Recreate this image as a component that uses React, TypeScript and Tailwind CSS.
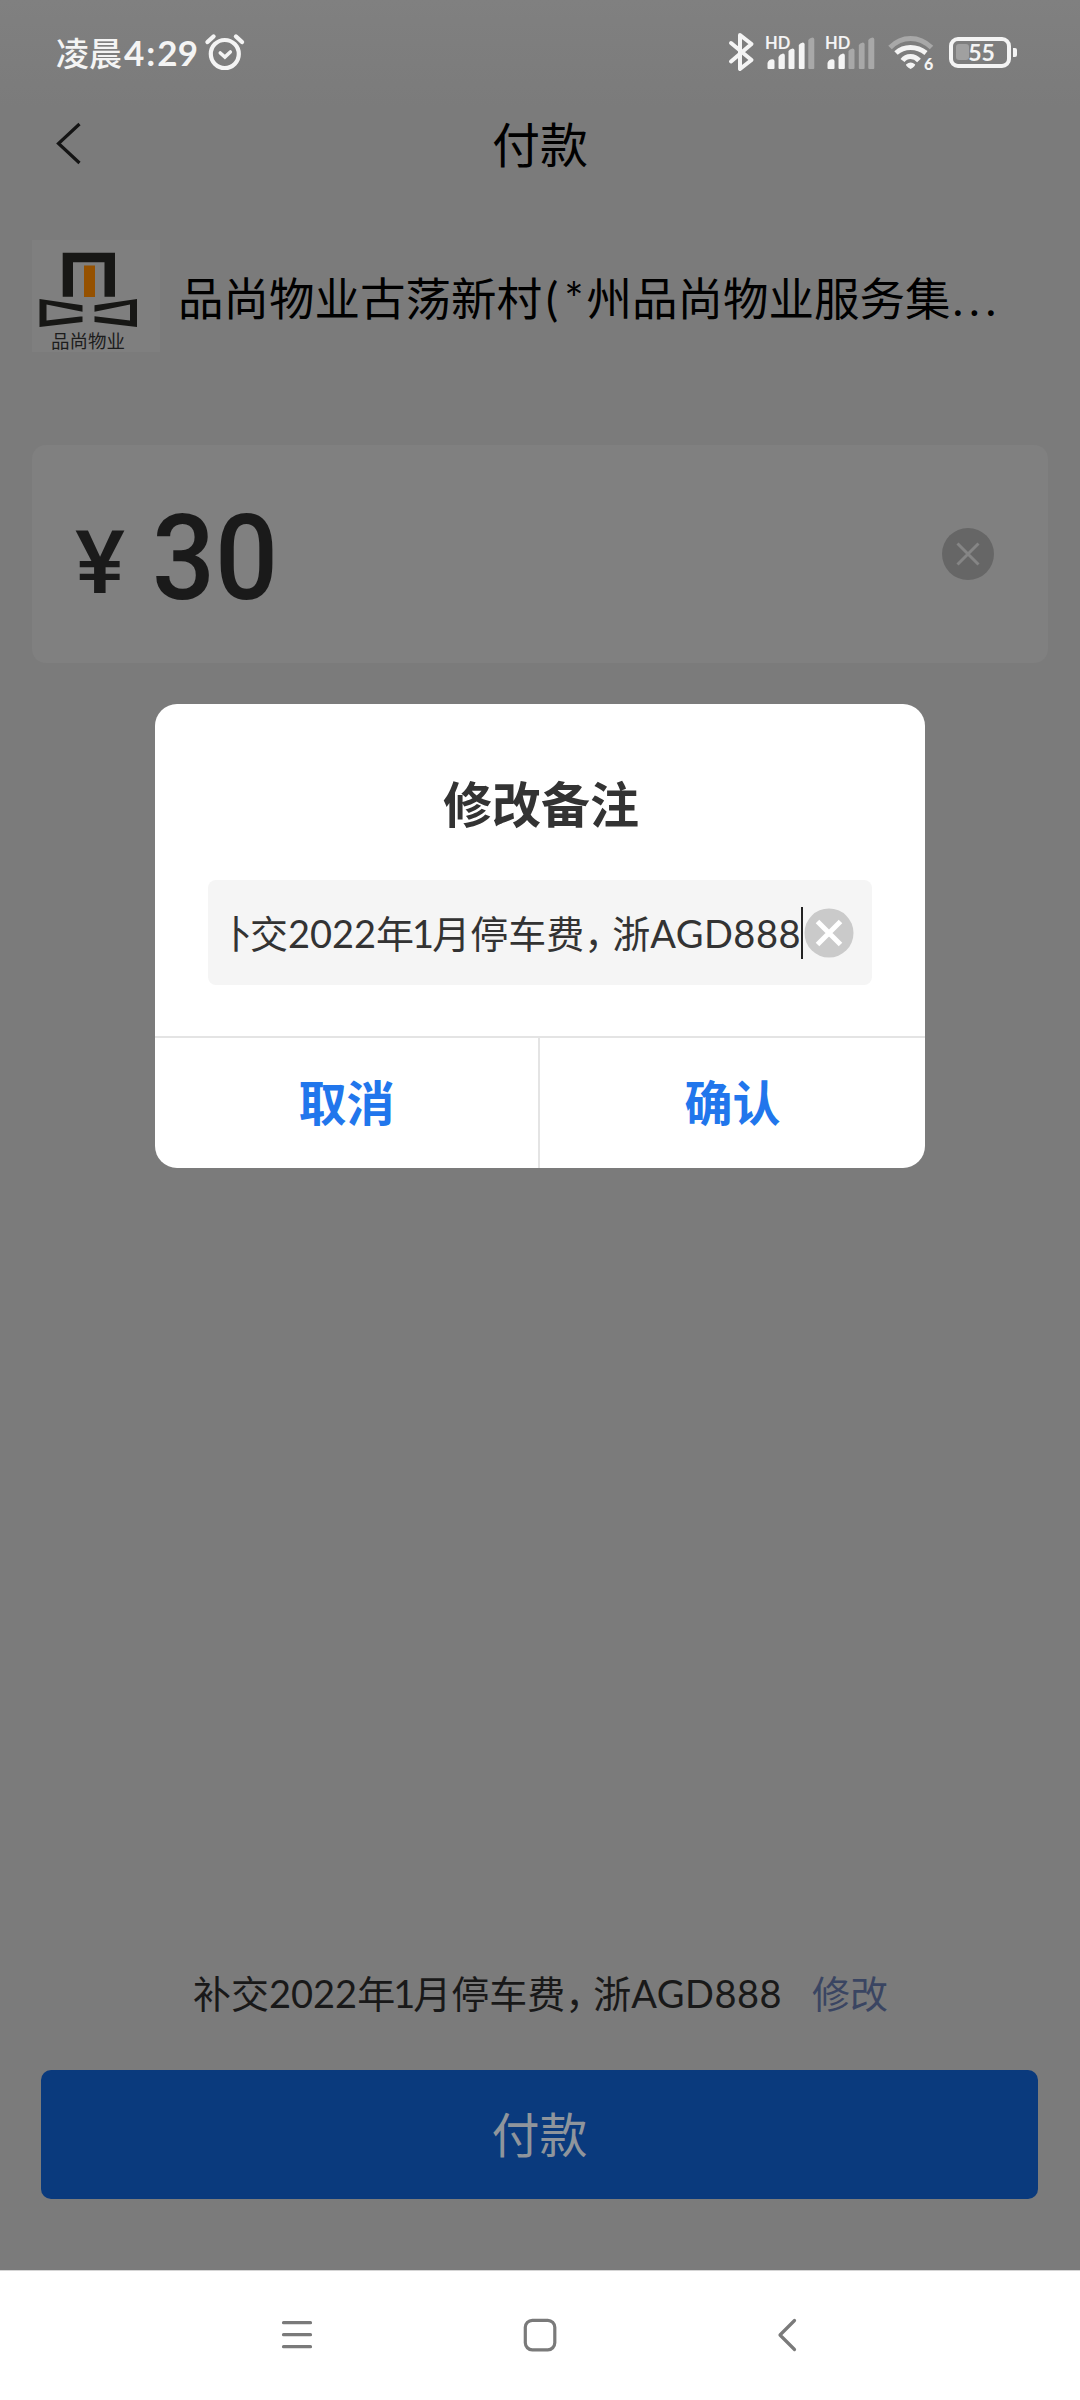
import React from "react";

const cjk = "font-['Lato','Noto_Sans_CJK_SC',sans-serif]";

function AlarmIcon() {
  return (
    <svg className="ml-[6px] h-[40px] w-[42px] shrink-0" viewBox="0 0 42 40" fill="none" stroke="#f4f4f4" strokeWidth="4.2" strokeLinecap="round">
      <circle cx="20.8" cy="22" r="14" />
      <path d="M16.3 21l4.6 4 5.4-5" strokeWidth="3.6" />
      <path d="M3.5 10l6-5.5M38 10l-6-5.5" strokeWidth="4.4" />
    </svg>
  );
}

function BluetoothIcon() {
  return (
    <svg className="h-[42px] w-[28px]" viewBox="727 31 28 42" fill="none" stroke="#f4f4f4" strokeWidth="4" strokeLinecap="round" strokeLinejoin="round">
      <path d="M731 43l20.500 17L740 69V35l11.500 9L731 61.500" />
    </svg>
  );
}

const bars = [
  "M2.500 36v-5q1-3.500 5-3.800a2 2 0 0 1 2 2V36q0 1-1 1h-5q-1 0-1-1z",
  "M13.500 36V25q1-3 4.500-3.600 1.800 0 1.800 2V36q0 1-1 1h-4.200q-1 0-1.100-1z",
  "M23.500 36V19q1-2 4-2.600 2 0 2 2V36q0 1-1 1h-4q-1 0-1-1z",
  "M33.800 36V13q1-2 4-2.600 1.800 0 1.800 2V36q0 1-1 1h-3.800q-1 0-1-1z",
  "M43.300 36V8q1-2 4-2.600 2 0 2 2V36q0 1-1 1h-4q-1 0-1-1z",
];

function Signal({ level }: { level: number }) {
  return (
    <div className="relative h-[40px] w-[50px]">
      <svg className="h-full w-full" viewBox="0 0 50 40">
        {bars.map((d, i) => (
          <path key={i} d={d} fill={i < level ? "#f4f4f4" : "#a8a8a8"} />
        ))}
      </svg>
      <span className="absolute -top-[1px] left-0 font-[Lato] text-[16.500px] leading-[24px] font-bold text-[#f4f4f4]">HD</span>
    </div>
  );
}

function WifiIcon() {
  return (
    <div className="relative h-[42px] w-[48px]">
      <svg className="h-full w-full" viewBox="887 31 48 42" fill="none" strokeWidth="5" strokeLinecap="butt">
        <path d="M890 47.500Q899 38.500 910.500 38.500T931.500 47.500" stroke="#a8a8a8" />
        <path d="M896 53Q902 47.500 910.500 47.500T926 53" stroke="#f4f4f4" />
        <path d="M902.500 60.500Q905.500 56.500 910.500 56.500T919 60.500" stroke="#f4f4f4" />
        <path d="M906 64.500q4.700-4 9.200 0 .2 1.500-4.600 4.600-4.800-3-4.600-4.600z" fill="#f4f4f4" />
      </svg>
      <span className="absolute top-[23px] left-[37px] font-[Lato] text-[16px] leading-[20px] font-black text-[#f4f4f4]">6</span>
    </div>
  );
}

function Battery() {
  return (
    <div className="flex items-center gap-[2px]">
      <div className="relative flex h-[31px] w-[62px] items-center justify-center rounded-[9px] border-[4.500px] border-[#f4f4f4]">
        <div className="absolute top-[3px] left-[3px] h-[16px] w-[13px] rounded-[3px] bg-[#a0a0a0]" />
        <span className="relative ml-[3px] font-[Lato] text-[23px] leading-[22px] font-bold text-[#f4f4f4]">55</span>
      </div>
      <div className="h-[9px] w-[4px] rounded-r-[2px] bg-[#f4f4f4]" />
    </div>
  );
}

function StatusBar() {
  return (
    <div className="flex h-[106px] shrink-0 items-start bg-linear-to-b from-[#808080] to-[#7b7b7b] pl-[56px]">
      <div className="mt-[32px] flex h-[40px] items-center">
        <span className={`${cjk} text-[33px] leading-[40px] font-medium whitespace-nowrap text-[#f4f4f4]`}>
          凌晨<span className="ml-[2px] text-[35px] font-bold">4<span className="mx-[2px]">:</span>29</span>
        </span>
        <AlarmIcon />
      </div>
      <div className="mt-[31px] mr-[63px] ml-auto flex h-[42px] items-center">
        <BluetoothIcon />
        <div className="ml-[10px]"><Signal level={4} /></div>
        <div className="ml-[10px]"><Signal level={2} /></div>
        <div className="ml-[12px]"><WifiIcon /></div>
        <div className="ml-[14px]"><Battery /></div>
      </div>
    </div>
  );
}

function Logo() {
  return (
    <div className="relative h-[112px] w-[128px] shrink-0 bg-[#7f7f7f]">
      <svg className="h-full w-full" viewBox="32 240 128 112" fill="#171715">
        <path d="M62.700 252.700H115V296.700H104.500V262.200H73V296.700H62.700z" />
        <path d="M84 265.500H95V297H84z" fill="#955100" />
        <path fillRule="evenodd" d="M39.500 299L82.500 305.300V322L39.500 327zM46.500 304.500V320.500L82.500 316.300V311.700z" />
        <path fillRule="evenodd" d="M137 299L94.500 305.300V322L137 327zM130 304.500V320.500L94.500 316.300V311.700z" />
      </svg>
      <span className="absolute top-[88px] left-[19px] font-['Noto_Sans_CJK_SC',sans-serif] text-[18.500px] leading-[24px] whitespace-nowrap text-[#1c1c1c]">品尚物业</span>
    </div>
  );
}

function Remark() {
  return (
    <span>
      补交2022年<span className="-mx-[2px]">1</span>月停车费
      <span className="mr-[9px] [font-feature-settings:'halt']">，</span>浙<span className="tracking-[0.500px]">AGD888</span>
    </span>
  );
}

function Dialog() {
  return (
    <div className="absolute top-[704px] left-[155px] flex h-[464px] w-[770px] flex-col overflow-hidden rounded-[22px] bg-white">
      <h2 className="mt-[66px] pl-[2px] text-center text-[49px] leading-[68px] font-bold text-[#333333]">修改备注</h2>
      <div className="mx-[53px] mt-[42px] flex h-[105px] items-center rounded-[8px] bg-[#f5f5f5] pl-[25px]">
        <div className="flex w-[568px] justify-end overflow-hidden text-[38px] leading-[52px] whitespace-nowrap text-[#333333]">
          <Remark />
        </div>
        <div className="h-[52px] w-[1.500px] bg-[#222222]" />
        <svg className="ml-px h-[50px] w-[50px]" viewBox="0 0 50 50">
          <circle cx="25" cy="25" r="24.500" fill="#cacaca" />
          <path d="M13.500 13.500L36.500 36.500M36.500 13.500L13.500 36.500" stroke="#fff" strokeWidth="5" />
        </svg>
      </div>
      <div className="mt-[51px] flex flex-1 border-t-2 border-[#e4e4e4] text-[48px] font-bold text-[#2176ec]">
        <button className="flex w-[385px] items-center justify-center border-r-2 border-[#e4e4e4]">取消</button>
        <button className="flex flex-1 items-center justify-center">确认</button>
      </div>
    </div>
  );
}

function NavBar() {
  return (
    <div className="h-[130px] border-t border-[#d5d5d5] bg-white">
      <svg className="h-[129px] w-[1080px]" viewBox="0 2271 1080 129" fill="none" stroke="#7a7a7a" strokeWidth="3.200" strokeLinecap="round" strokeLinejoin="round">
        <path d="M283.500 2322.700h27M283.500 2334.700h27M283.500 2346.700h27" />
        <rect x="525.300" y="2320.300" width="29.500" height="29.500" rx="7" />
        <path d="M794.500 2320.500L780 2335l14.500 14.500" />
      </svg>
    </div>
  );
}

export default function App() {
  return (
    <div className={`${cjk} relative flex h-[2400px] w-[1080px] flex-col overflow-hidden bg-[#7b7b7b]`} lang="zh-CN">
      <StatusBar />
      <header className="relative flex h-[78px] items-center justify-center">
        <svg className="absolute top-[14px] left-[54px] h-[48px] w-[32px]" viewBox="54 120 32 48" fill="none" stroke="#141414" strokeWidth="3.200">
          <path d="M79.500 124L58.500 143.500L79.500 163" />
        </svg>
        <h1 className="text-[48px] leading-[78px] text-black">付款</h1>
      </header>
      <div className="mt-[56px] flex h-[112px] items-center pl-[32px]">
        <Logo />
        <span className="ml-[18px] pt-[6px] text-[45.500px] leading-[60px] whitespace-nowrap text-black">
          品尚物业古荡新村<span className="mr-[3px] ml-[4px]">(</span><span className="mr-[3px] ml-[3px]">*</span>州品尚物业服务集<span className="ml-[2px] tracking-[5.800px]">...</span>
        </span>
      </div>
      <section className="mx-[32px] mt-[93px] flex h-[218px] items-center rounded-[14px] bg-[#808080] font-[Roboto] font-medium text-[#1a1a1a]">
        <span className="ml-[43px] origin-left scale-x-[1.07] pt-[18px] text-[88px] leading-[100px]">¥</span>
        <span className="ml-[30px] origin-left scale-x-[0.94] pt-[9px] text-[118px] leading-[130px]">30</span>
        <svg className="mr-[54px] mb-px ml-auto h-[52px] w-[52px]" viewBox="0 0 52 52">
          <circle cx="26" cy="26" r="26" fill="#666666" />
          <path d="M15.500 15.500l21 21M36.500 15.500l-21 21" stroke="#858585" strokeWidth="3" />
        </svg>
      </section>
      <div className="mt-auto flex items-center pl-[193px] text-[38px] leading-[52px] whitespace-nowrap text-[#191919]">
        <Remark />
        <a className="ml-[30px] text-[#3a4562]">修改</a>
      </div>
      <button className="mt-[51px] ml-[41px] h-[129px] w-[997px] shrink-0 rounded-[10px] bg-[#0a3a7d] text-[48px] text-[#8f959c]">付款</button>
      <div className="mt-[71px] shrink-0">
        <NavBar />
      </div>
      <Dialog />
    </div>
  );
}
